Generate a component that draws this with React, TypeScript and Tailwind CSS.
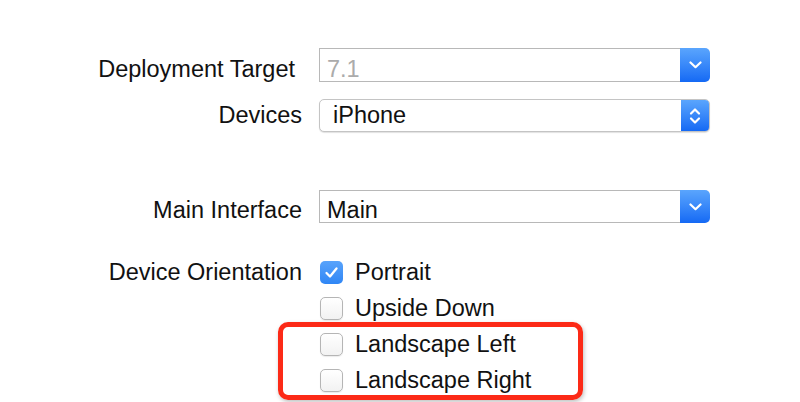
import React from 'react';

const font = { fontFamily: '"Liberation Sans", Arial, sans-serif' };

function ChevronDown() {
  return (
    <svg width="13" height="8" viewBox="0 0 13 8" fill="none">
      <path d="M1.5 1.5 L6.5 6.2 L11.5 1.5" stroke="white" strokeWidth="2.2" strokeLinecap="round" strokeLinejoin="round" />
    </svg>
  );
}

function ChevronUpDown() {
  return (
    <svg width="12" height="20" viewBox="0 0 12 20" fill="none">
      <path d="M2 7.5 L6 3.5 L10 7.5" stroke="white" strokeWidth="2.2" strokeLinecap="round" strokeLinejoin="round" />
      <path d="M2 12.5 L6 16.5 L10 12.5" stroke="white" strokeWidth="2.2" strokeLinecap="round" strokeLinejoin="round" />
    </svg>
  );
}

function ComboBox({ value, muted, height, padTop }: { value: string; muted?: boolean; height: string; padTop: string }) {
  return (
    <div className={`flex w-[391px] ${height}`}>
      <div className={`flex-1 border border-r-0 border-[#b8b8b8] bg-white pl-[7px] ${padTop} leading-[26px] ${muted ? 'text-[#ababab]' : 'text-[#111]'}`}>
        {value}
      </div>
      <div className="flex w-[30px] items-center justify-center rounded-r-[5px] bg-gradient-to-b from-[#5aa5fd] to-[#1469f4]">
        <ChevronDown />
      </div>
    </div>
  );
}

function PopUp({ value }: { value: string }) {
  return (
    <div className="flex h-[33px] w-[391px] overflow-hidden rounded-[5px] border border-[#c4c4c4] bg-white shadow-[0_1px_1px_rgba(0,0,0,0.12)]">
      <div className="flex-1 pl-[13px] leading-[31px] text-[#111]">{value}</div>
      <div className="flex w-[28px] items-center justify-center bg-gradient-to-b from-[#5aa5fd] to-[#1469f4]">
        <ChevronUpDown />
      </div>
    </div>
  );
}

function Checkbox({ checked, label }: { checked?: boolean; label: string }) {
  return (
    <div className="flex h-[36px] items-center">
      {checked ? (
        <div className="flex h-[23px] w-[23px] items-center justify-center rounded-[5px] bg-gradient-to-b from-[#58a3fb] to-[#2f86f5]">
          <svg width="15" height="13" viewBox="0 0 15 13" fill="none">
            <path d="M2.5 7 L6 10.5 L12.5 2.5" stroke="white" strokeWidth="2.3" strokeLinecap="round" strokeLinejoin="round" />
          </svg>
        </div>
      ) : (
        <div className="h-[23px] w-[23px] rounded-[5px] border border-[#b5b5b5] bg-gradient-to-b from-white to-[#f2f2f2] shadow-[0_1px_1px_rgba(0,0,0,0.08)]" />
      )}
      <span className="ml-[12px] leading-[36px] text-[#111]">{label}</span>
    </div>
  );
}

export default function App() {
  return (
    <div className="h-[402px] w-[800px] overflow-hidden bg-white text-[23.5px]" style={font}>
      <div className="flex flex-col">
        <div className="mt-[48px] flex">
          <div className="w-[302px] pr-[7px] pt-[8px] text-right leading-[26px] text-[#111]">Deployment Target</div>
          <div className="ml-[17px]">
            <ComboBox value="7.1" muted height="h-[34px]" padTop="pt-[7px]" />
          </div>
        </div>

        <div className="mt-[17px] flex">
          <div className="w-[302px] text-right leading-[33px] text-[#111]">Devices</div>
          <div className="ml-[17px]">
            <PopUp value="iPhone" />
          </div>
        </div>

        <div className="mt-[58px] flex">
          <div className="w-[302px] pt-[7px] text-right leading-[26px] text-[#111]">Main Interface</div>
          <div className="ml-[17px]">
            <ComboBox value="Main" height="h-[33px]" padTop="pt-[6px]" />
          </div>
        </div>

        <div className="mt-[31px] flex">
          <div className="w-[302px] text-right leading-[36px] text-[#111]">Device Orientation</div>
          <div className="relative ml-[18px] flex flex-col">
            <Checkbox checked label="Portrait" />
            <Checkbox label="Upside Down" />
            <Checkbox label="Landscape Left" />
            <Checkbox label="Landscape Right" />
            <div className="absolute left-[-42px] top-[68px] h-[78px] w-[305px] rounded-[10px] border-[5px] border-[#fc2a17] shadow-[1px_2px_4px_rgba(0,0,0,0.25)]" />
          </div>
        </div>
      </div>
    </div>
  );
}
